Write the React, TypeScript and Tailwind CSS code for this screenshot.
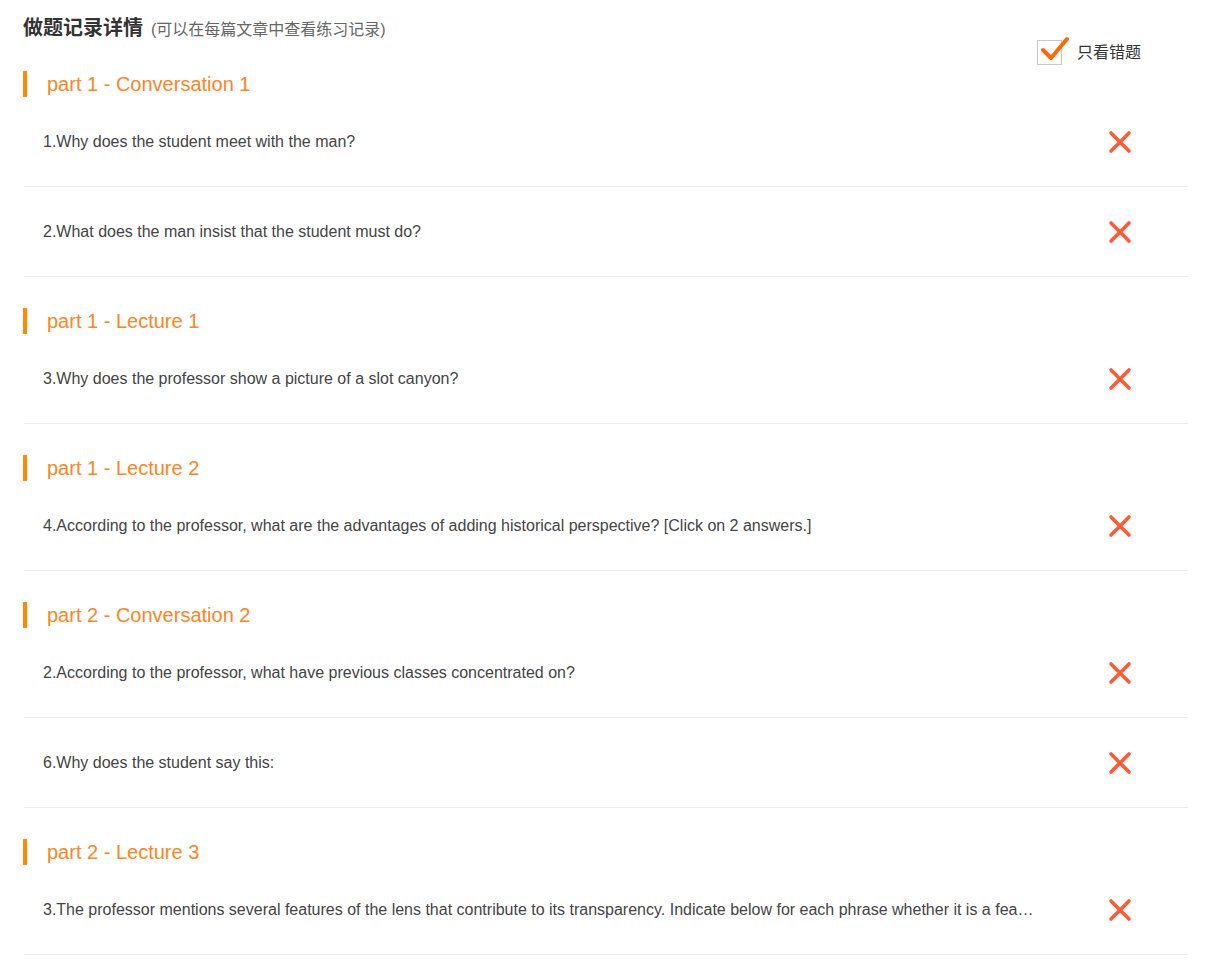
import React from "react";

type Question = { text: string };
type Section = { title: string; questions: Question[] };

const SECTIONS: Section[] = [
  {
    title: "part 1 - Conversation 1",
    questions: [
      { text: "1.Why does the student meet with the man?" },
      { text: "2.What does the man insist that the student must do?" },
    ],
  },
  {
    title: "part 1 - Lecture 1",
    questions: [{ text: "3.Why does the professor show a picture of a slot canyon?" }],
  },
  {
    title: "part 1 - Lecture 2",
    questions: [
      {
        text: "4.According to the professor, what are the advantages of adding historical perspective? [Click on 2 answers.]",
      },
    ],
  },
  {
    title: "part 2 - Conversation 2",
    questions: [
      { text: "2.According to the professor, what have previous classes concentrated on?" },
      { text: "6.Why does the student say this:" },
    ],
  },
  {
    title: "part 2 - Lecture 3",
    questions: [
      {
        text: "3.The professor mentions several features of the lens that contribute to its transparency. Indicate below for each phrase whether it is a feature of the lens or not.",
      },
    ],
  },
];

function WrongIcon() {
  return (
    <svg width="24" height="24" viewBox="0 0 24 24">
      <path d="M3 3 L21 21 M21 3 L3 21" stroke="#ff5a36" strokeWidth="3.6" strokeLinecap="round" fill="none" />
    </svg>
  );
}

function CheckBox() {
  return (
    <div className="relative w-[25px] h-[25px] border border-[#c8c8c8] bg-white">
      <svg className="absolute left-[3px] top-[-5px]" width="30" height="28" viewBox="0 0 30 28">
        <path d="M2 14 L10 22 L26 3" stroke="#ff6a00" strokeWidth="4" strokeLinecap="round" strokeLinejoin="round" fill="none" />
      </svg>
    </div>
  );
}

export default function App() {
  return (
    <div
      className="relative w-[1206px] min-h-[960px] bg-white pl-[23px] pr-[18px]"
      style={{ fontFamily: '"Liberation Sans", Arial, "Noto Sans CJK SC", sans-serif' }}
    >
      {/* header */}
      <div className="flex items-baseline h-[45px] pt-[12px]">
        <h1 className="text-[20px] leading-[32px] font-bold text-[#333]">做题记录详情</h1>
        <span className="ml-[8px] text-[16px] text-[#666]">(可以在每篇文章中查看练习记录)</span>
      </div>

      <div className="absolute left-[1037px] top-[40px] flex items-center">
        <CheckBox />
        <span className="ml-[15px] text-[16px] text-[#333]">只看错题</span>
      </div>

      {SECTIONS.map((section, i) => (
        <div key={i}>
          <div className={`${i === 0 ? "pt-[26px]" : "pt-[31px]"} flex items-center`}>
            <div className="w-[4px] h-[26px] bg-[#ff8a00]" />
            <span className="ml-[20px] text-[20px] leading-[26px] text-[#ff8420]">{section.title}</span>
          </div>
          {section.questions.map((q, j) => (
            <div key={j} className="ml-[1px] h-[90px] flex items-center border-b border-[#ececec]">
              <div className="w-[1010px] pl-[19px] text-[16px] text-[#444] truncate">{q.text}</div>
              <div className="ml-[74px]">
                <WrongIcon />
              </div>
            </div>
          ))}
        </div>
      ))}
    </div>
  );
}
